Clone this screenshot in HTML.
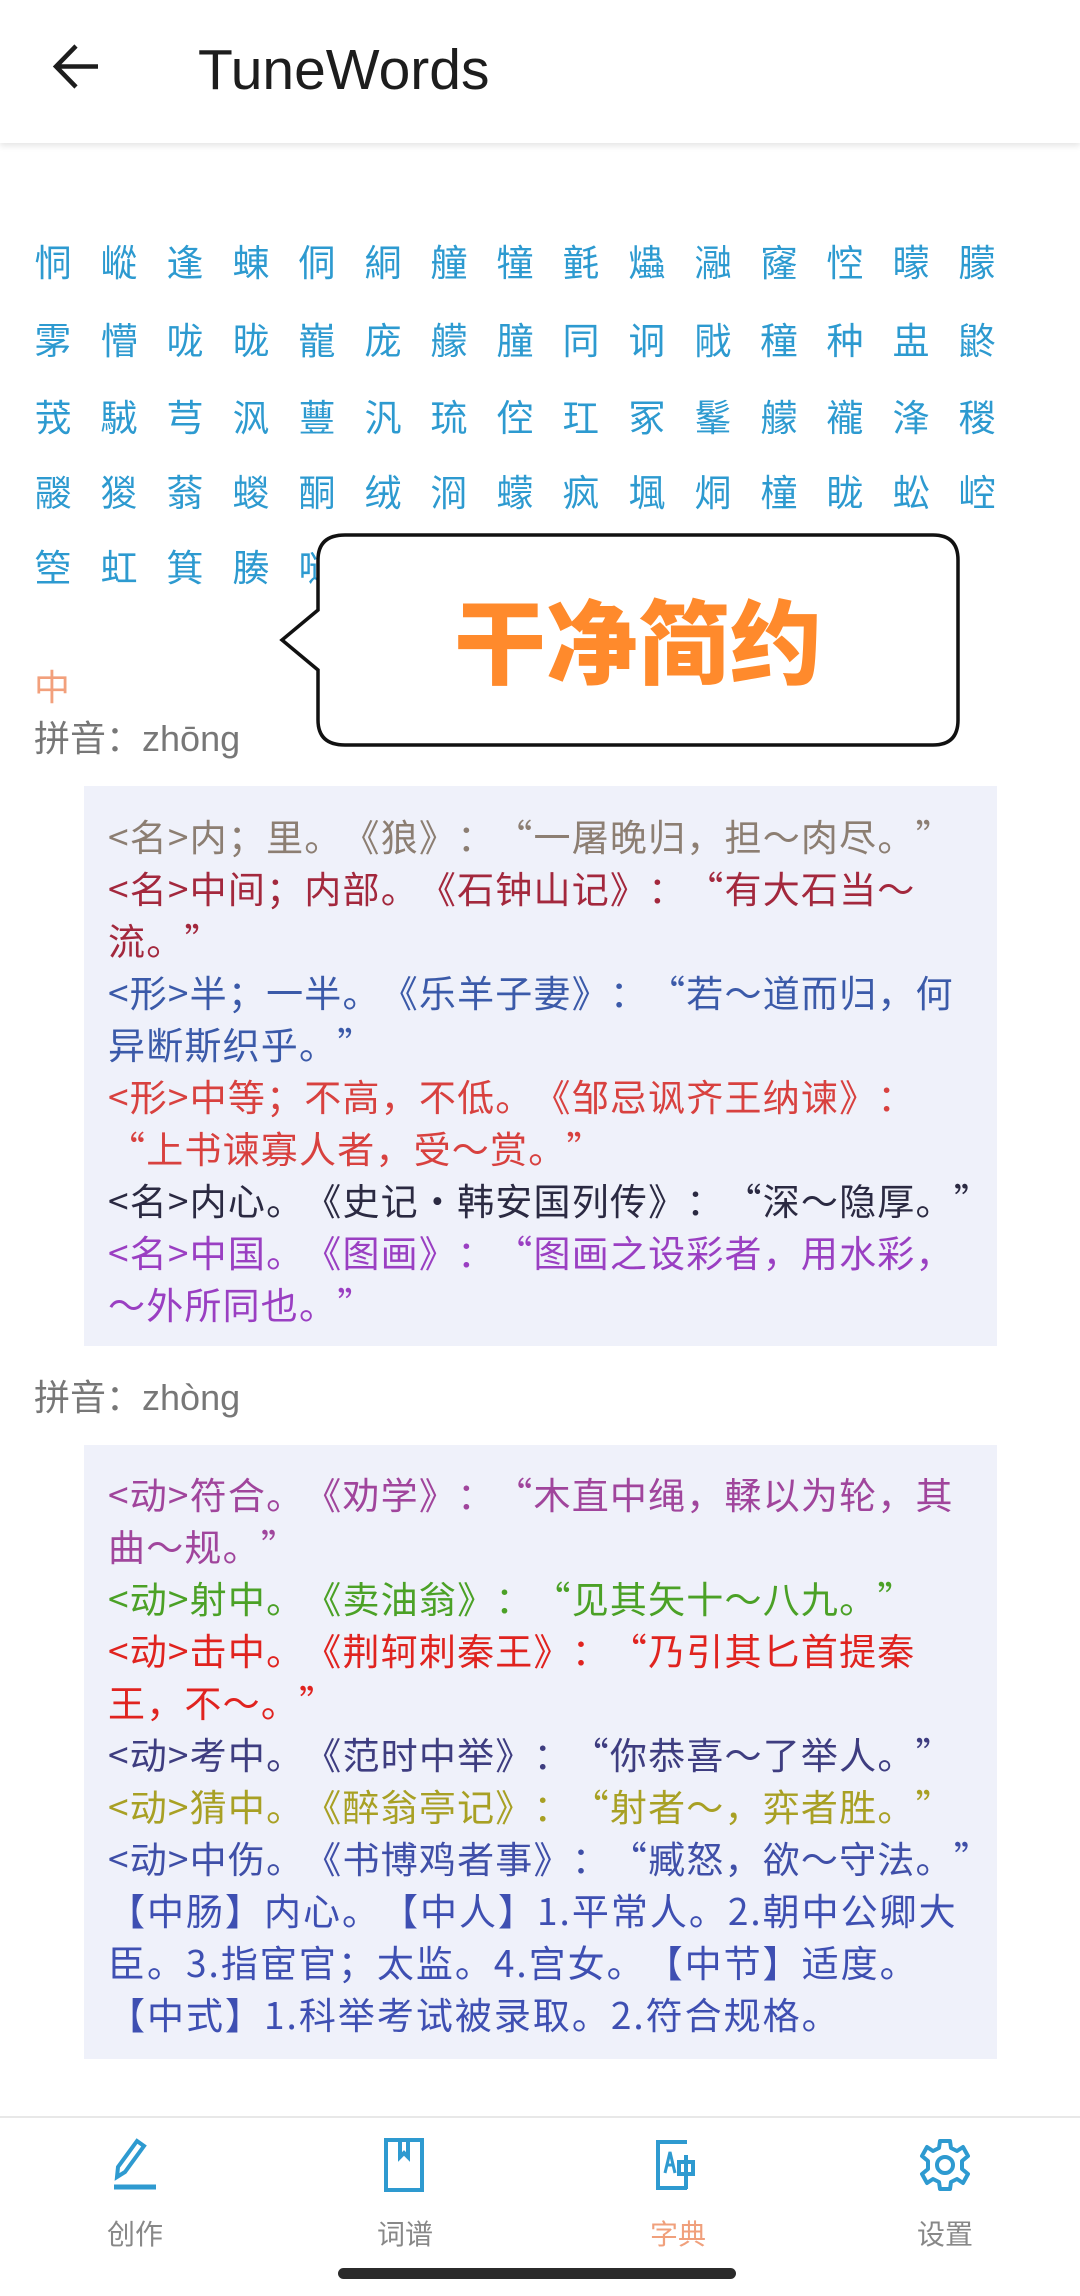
<!DOCTYPE html>
<html><head><meta charset="utf-8"><style>
*{margin:0;padding:0;box-sizing:border-box}
body{width:1080px;height:2296px;background:#fff;position:relative;overflow:hidden;font-family:"Liberation Sans","Noto Sans CJK SC",sans-serif;text-spacing-trim:space-all}
.hdr{position:absolute;left:0;top:0;width:1080px;height:143px;background:#fff;box-shadow:0 3px 6px rgba(0,0,0,0.10)}
.title{position:absolute;left:198px;top:38px;font-size:57px;color:#1d1d1d;line-height:64px}
.g{position:absolute;font-size:37px;color:#2d9ad0;width:66px;text-align:center;line-height:40px;font-family:"Noto Sans CJK SC",sans-serif}
.t{position:absolute;font-family:"Liberation Sans","Noto Sans CJK SC",sans-serif;white-space:nowrap;text-spacing-trim:space-all}
.box{position:absolute;left:84px;width:913px;background:#eff1fa}
.ln{position:absolute;left:108px;font-size:37px;line-height:52px;white-space:nowrap;font-family:"Noto Sans CJK SC",sans-serif;text-spacing-trim:space-all;letter-spacing:1.2px}
.q{font-feature-settings:"fwid";}
.nav{position:absolute;left:0;top:2116px;width:1080px;height:180px;border-top:2px solid #e8e8e8;background:#fff}
.lab{position:absolute;top:2215px;font-size:28px;width:120px;text-align:center;color:#888;font-family:"Noto Sans CJK SC",sans-serif;line-height:36px}
</style></head><body>
<div class="hdr">
<svg style="position:absolute;left:52px;top:42px" width="50" height="50" viewBox="0 0 50 50"><path d="M46 24.5H6 M24 4 L4 24.5 L24 45" stroke="#1d1d1d" stroke-width="4.5" fill="none"/></svg>
<div class="title">TuneWords</div>
</div>

<div id="grid"></div>
<script>
var rows=[];
rows[0]="恫嵷逢蝀侗絧艟犝氃爞瀜窿悾曚朦";
rows[1]="雺懵咙昽巃庞艨朣同诇戙穜种盅鼨";
rows[2]="茙駥芎沨蘴汎琉倥玒冢髼艨襱浲稯";
rows[3]="鬷猣蓊蝬酮绒浻蠓疯堸烔橦眬蚣崆";
rows[4]="箜虹箕腠嗵";
var ys=[240,318,395,470,545];var h="";
for(var r=0;r<rows.length;r++){var s=Array.from(rows[r]);for(var c=0;c<s.length;c++){h+='<div class="g" style="left:'+(20+c*66)+'px;top:'+ys[r]+'px">'+s[c]+'</div>';}}
document.getElementById('grid').innerHTML=h;
</script>

<svg style="position:absolute;left:276px;top:532px" width="690" height="220" viewBox="276 532 690 220">
<path d="M345 535 H933 Q958 535 958 560 V720 Q958 745 933 745 H345 Q318 745 318 720 V670 L282 640 L318 610 V560 Q318 535 345 535 Z" fill="#fff" stroke="#111" stroke-width="3.5"/>
</svg>
<div class="t" style="left:318px;top:586px;width:640px;text-align:center;font-size:92px;line-height:104px;font-weight:900;color:#ff8a2c;font-family:'Noto Sans CJK SC',sans-serif">干净简约</div>

<div class="t" style="left:34px;top:664px;font-size:36px;line-height:42px;color:#f2a07c;font-family:'Noto Sans CJK SC',sans-serif">中</div>
<div class="t" style="left:34px;top:717px;font-size:36px;line-height:44px;color:#777">拼音<span class="q">：</span>zhōng</div>

<div class="box" style="top:786px;height:560px"></div>
<div class="ln" style="top:809px;color:#8c7e72">&lt;名&gt;内；里。《狼》：“一屠晚归，担～肉尽。”</div>
<div class="ln" style="top:861px;color:#a3283d">&lt;名&gt;中间；内部。《石钟山记》：“有大石当～</div>
<div class="ln" style="top:913px;color:#a3283d">流。”</div>
<div class="ln" style="top:965px;color:#3b5aa9">&lt;形&gt;半；一半。《乐羊子妻》：“若～道而归，何</div>
<div class="ln" style="top:1017px;color:#3b5aa9">异断斯织乎。”</div>
<div class="ln" style="top:1069px;color:#d8413f">&lt;形&gt;中等；不高，不低。《邹忌讽齐王纳谏》：</div>
<div class="ln" style="top:1121px;color:#d8413f">“上书谏寡人者，受～赏。”</div>
<div class="ln" style="top:1173px;color:#2b2a42">&lt;名&gt;内心。《史记·韩安国列传》：“深～隐厚。”</div>
<div class="ln" style="top:1225px;color:#9a3fc2">&lt;名&gt;中国。《图画》：“图画之设彩者，用水彩，</div>
<div class="ln" style="top:1277px;color:#9a3fc2">～外所同也。”</div>

<div class="t" style="left:34px;top:1376px;font-size:36px;line-height:44px;color:#777">拼音<span class="q">：</span>zhòng</div>

<div class="box" style="top:1445px;height:614px"></div>
<div class="ln" style="top:1467px;color:#a0459c">&lt;动&gt;符合。《劝学》：“木直中绳，輮以为轮，其</div>
<div class="ln" style="top:1519px;color:#a0459c">曲～规。”</div>
<div class="ln" style="top:1571px;color:#4ba126">&lt;动&gt;射中。《卖油翁》：“见其矢十～八九。”</div>
<div class="ln" style="top:1623px;color:#e0231f">&lt;动&gt;击中。《荆轲刺秦王》：“乃引其匕首提秦</div>
<div class="ln" style="top:1675px;color:#e0231f">王，不～。”</div>
<div class="ln" style="top:1727px;color:#3e3d80">&lt;动&gt;考中。《范时中举》：“你恭喜～了举人。”</div>
<div class="ln" style="top:1779px;color:#a8a024">&lt;动&gt;猜中。《醉翁亭记》：“射者～，弈者胜。”</div>
<div class="ln" style="top:1831px;color:#3f4fa8">&lt;动&gt;中伤。《书博鸡者事》：“臧怒，欲～守法。”</div>
<div class="ln" style="top:1883px;color:#3e4fb2;letter-spacing:2px">【中肠】内心。【中人】1.平常人。2.朝中公卿大</div>
<div class="ln" style="top:1935px;color:#3e4fb2;letter-spacing:2px">臣。3.指宦官；太监。4.宫女。【中节】适度。</div>
<div class="ln" style="top:1987px;color:#3e4fb2;letter-spacing:2px">【中式】1.科举考试被录取。2.符合规格。</div>
<script>
document.querySelectorAll('.ln').forEach(function(e){e.innerHTML=e.innerHTML.replace(/([。，；《》·])/g,'<span class="q">$1</span>');});
</script>

<div class="nav"></div>
<svg style="position:absolute;left:107px;top:2137px" width="56" height="56" viewBox="0 0 56 56" fill="none" stroke="#2e9ad0" stroke-width="4"><path d="M10 40 L11 30 L30 4 L37 9 L18 35 Z"/><path d="M7 50 H49" stroke-width="5"/></svg>
<svg style="position:absolute;left:377px;top:2137px" width="56" height="56" viewBox="0 0 56 56" fill="none" stroke="#2e9ad0" stroke-width="4"><rect x="9" y="3" width="36" height="50"/><path d="M23 3 V20 L27 16 L31 20 V3"/></svg>
<svg style="position:absolute;left:650px;top:2137px" width="56" height="56" viewBox="0 0 56 56" fill="none" stroke="#2e9ad0" stroke-width="4"><path d="M37 5 H8 V51 H37"/><path d="M15 36 L20 15 L25 36 M17 28 H23" stroke-width="3"/><rect x="29" y="25" width="14" height="12"/><path d="M36 18 V52"/></svg>
<svg style="position:absolute;left:917px;top:2137px" width="56" height="56" viewBox="0 0 56 56" fill="none" stroke="#2e9ad0" stroke-width="4"><path d="M23 4 H33 L34 11 L40 14 L46 10 L51 19 L45 24 V32 L51 37 L46 46 L40 42 L34 45 L33 52 H23 L22 45 L16 42 L10 46 L5 37 L11 32 V24 L5 19 L10 10 L16 14 L22 11 Z" stroke-linejoin="round"/><circle cx="28" cy="28" r="8"/></svg>
<div class="lab" style="left:75px">创作</div>
<div class="lab" style="left:345px">词谱</div>
<div class="lab" style="left:618px;color:#f0a07c">字典</div>
<div class="lab" style="left:885px">设置</div>
<div style="position:absolute;left:338px;top:2268px;width:398px;height:11px;border-radius:6px;background:#2b2b2b"></div>
</body></html>
